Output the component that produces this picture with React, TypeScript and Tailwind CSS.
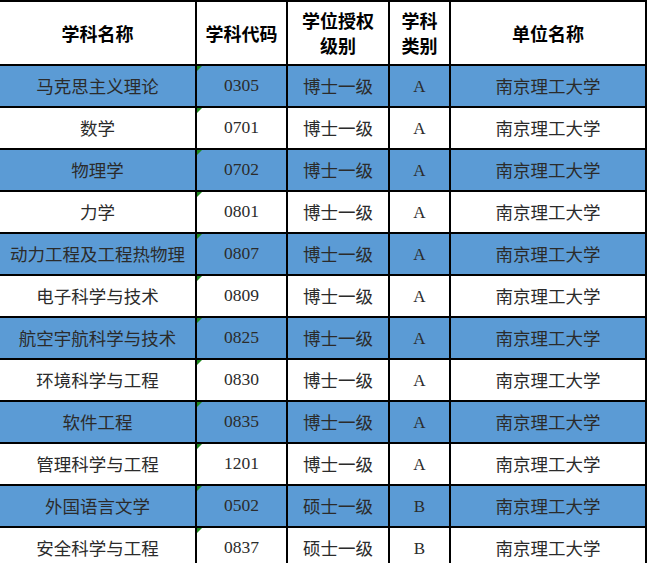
import React from "react";

const rows: [string, string, string, string][] = [
  ["马克思主义理论", "0305", "博士一级", "A"],
  ["数学", "0701", "博士一级", "A"],
  ["物理学", "0702", "博士一级", "A"],
  ["力学", "0801", "博士一级", "A"],
  ["动力工程及工程热物理", "0807", "博士一级", "A"],
  ["电子科学与技术", "0809", "博士一级", "A"],
  ["航空宇航科学与技术", "0825", "博士一级", "A"],
  ["环境科学与工程", "0830", "博士一级", "A"],
  ["软件工程", "0835", "博士一级", "A"],
  ["管理科学与工程", "1201", "博士一级", "A"],
  ["外国语言文学", "0502", "硕士一级", "B"],
  ["安全科学与工程", "0837", "硕士一级", "B"],
];

const cjk = "font-['Noto_Sans_CJK_SC',sans-serif]";
const serif = "font-['Liberation_Serif',serif]";

export default function App() {
  return (
    <div className="w-[648px] h-[563px] overflow-hidden bg-white">
      <table className="table-fixed border-collapse w-[646px] text-[#2b2b2b]">
        <colgroup>
          <col className="w-[196px]" />
          <col className="w-[91px]" />
          <col className="w-[102px]" />
          <col className="w-[61px]" />
          <col className="w-[196px]" />
        </colgroup>
        <thead>
          <tr className={`h-[64px] text-black font-bold text-[18px] leading-[25px] ${cjk}`}>
            <th className="border-2 border-l-0 border-black text-center align-middle">学科名称</th>
            <th className="border-2 border-black text-center align-middle">学科代码</th>
            <th className="border-2 border-black text-center align-middle">
              学位授权
              <br />
              级别
            </th>
            <th className="border-2 border-black text-center align-middle">
              学科
              <br />
              类别
            </th>
            <th className="border-2 border-black text-center align-middle">单位名称</th>
          </tr>
        </thead>
        <tbody>
          {rows.map((r, i) => {
            const bg = i % 2 === 0 ? "bg-[#5b9bd5]" : "bg-white";
            return (
              <tr key={i} className={`h-[42px] ${bg}`}>
                <td className={`border-2 border-l-0 border-black text-center text-[17.5px] leading-none ${cjk}`}>{r[0]}</td>
                <td className={`relative border-2 border-black text-center text-[17.5px] leading-none ${serif}`}>
                  <span className="absolute left-0 top-0 w-0 h-0 border-t-[5px] border-r-[5px] border-t-[#1e8a1e] border-r-transparent" />
                  {r[1]}
                </td>
                <td className={`border-2 border-black text-center text-[17.5px] leading-none ${cjk}`}>{r[2]}</td>
                <td className={`border-2 border-black text-center text-[17px] leading-none ${serif}`}>{r[3]}</td>
                <td className={`border-2 border-black text-center text-[17.5px] leading-none ${cjk}`}>南京理工大学</td>
              </tr>
            );
          })}
        </tbody>
      </table>
    </div>
  );
}
